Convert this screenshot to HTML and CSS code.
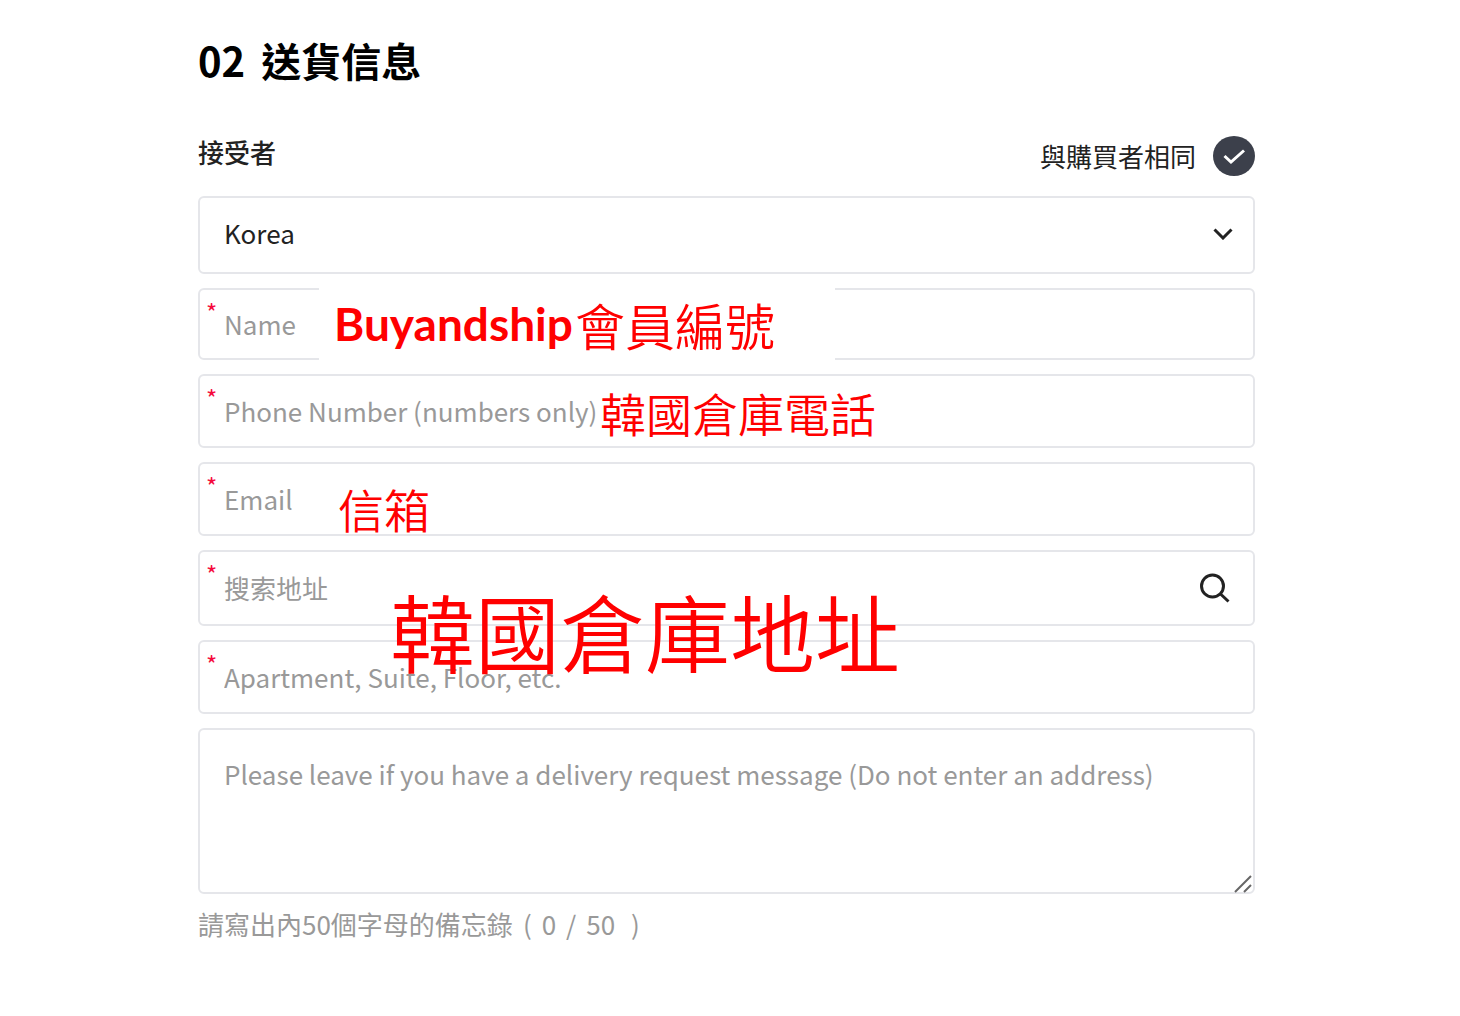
FILE: index.html
```html
<!DOCTYPE html>
<html lang="zh-Hant">
<head>
<meta charset="utf-8">
<meta name="viewport" content="width=device-width, initial-scale=1">
<title>送貨信息</title>
<link rel="stylesheet" href="styles.css">
</head>
<body>
<main class="page">
  <h1 class="title"><span>02</span> <span>送貨信息</span></h1>
  <form class="form">
    <div class="form-head">
      <h2 class="subtitle">接受者</h2>
      <label class="same" for="same">與購買者相同
        <span class="check">
          <input class="check-input" type="checkbox" id="same" checked>
          <svg class="check-mark" viewBox="0 0 42 40" aria-hidden="true"><path d="M11.500 20l6.500 6L31 14.500"/></svg>
        </span>
      </label>
    </div>

    <div class="field field-country">
      <select class="control select" aria-label="Country">
        <option>Korea</option>
      </select>
      <svg class="icon chevron" viewBox="0 0 20 12" aria-hidden="true"><path d="M1.500 1.500L10 10l8.500-8.500"/></svg>
    </div>

    <div class="field field-name required">
      <input class="control" type="text" placeholder="Name" aria-label="Name" required>
      <p class="note note-name"><b class="note-brand">Buyandship</b><span>會員編號</span></p>
    </div>

    <div class="field required">
      <input class="control" type="tel" placeholder="Phone Number (numbers only)" aria-label="Phone Number" required>
      <p class="note note-phone">韓國倉庫電話</p>
    </div>

    <div class="field required">
      <input class="control" type="email" placeholder="Email" aria-label="Email" required>
      <p class="note note-email">信箱</p>
    </div>

    <div class="field field-address required">
      <input class="control" type="text" placeholder="搜索地址" aria-label="搜索地址" required>
      <button class="search" type="button" aria-label="搜索">
        <svg class="search-icon" viewBox="0 0 32 32" aria-hidden="true"><circle cx="13.500" cy="14" r="11"/><path d="M21.500 22l8 7.500"/></svg>
      </button>
      <p class="note note-address">韓國倉庫地址</p>
    </div>

    <div class="field required">
      <input class="control" type="text" placeholder="Apartment, Suite, Floor, etc." aria-label="Apartment, Suite, Floor, etc." required>
    </div>

    <div class="field field-message">
      <textarea class="control message" placeholder="Please leave if you have a delivery request message (Do not enter an address)" aria-label="Delivery request message" aria-describedby="count" maxlength="50"></textarea>
      <svg class="grip" viewBox="0 0 20 20" aria-hidden="true"><path d="M2 18L18 2M11 18l7-7"/></svg>
    </div>
    <p class="count" id="count"><span>請寫出內50個字母的備忘錄</span> <span>(</span> <span>0</span> <span>/</span> <span>50</span> <span>&nbsp;)</span></p>
  </form>
</main>
</body>
</html>
```
FILE: styles.css
```css
* {
  box-sizing: border-box;
}

body {
  margin: 0;
  background: #fff;
  color: #222;
  font-family: "Noto Sans CJK TC", "Noto Sans", sans-serif;
  font-size: 26px;
  line-height: 36px;
}

.page {
  padding: 30px 205px 72px 198px;
}

.title {
  display: flex;
  gap: 16px;
  margin: 0 0 44px;
  color: #000;
  font-size: 40px;
  line-height: 60px;
  font-weight: 700;
}

.form {
  display: flex;
  flex-direction: column;
  gap: 14px;
}

.form-head {
  display: flex;
  justify-content: space-between;
  height: 48px;
}

.subtitle {
  margin: 0;
  font-size: 26px;
  line-height: 36px;
  font-weight: 500;
}

.same {
  display: flex;
  align-items: center;
  gap: 17px;
  height: 44px;
}

.check {
  display: grid;
  width: 42px;
  height: 40px;
}

.check-input,
.check-mark {
  grid-area: 1 / 1;
  width: 100%;
  height: 100%;
  margin: 0;
}

.check-input {
  appearance: none;
  border-radius: 50%;
  background: #3c404b;
}

.check-mark {
  fill: none;
  stroke: #fff;
  stroke-width: 3;
  pointer-events: none;
}

.field {
  position: relative;
  display: flex;
  height: 74px;
}

.field-country {
  height: 78px;
}

.field-name {
  height: 72px;
}

.field-address {
  height: 76px;
}

.field-message {
  height: 166px;
}

.control {
  flex: 1;
  min-width: 0;
  margin: 0;
  padding: 0 24px;
  border: 2px solid #e5e6ea;
  border-radius: 6px;
  background: #fff;
  color: #222;
  font: inherit;
}

.control::placeholder {
  color: #999;
  opacity: 1;
}

.select {
  appearance: none;
  padding-bottom: 4px;
}

.message {
  padding: 26px 24px;
  resize: none;
}

.required::before {
  content: "*";
  position: absolute;
  top: 8px;
  left: 8px;
  color: #f5093c;
  font-size: 24px;
  line-height: 32px;
}

.icon,
.search,
.grip {
  position: absolute;
}

.chevron {
  top: 32px;
  right: 22px;
  width: 20px;
  height: 12px;
  fill: none;
  stroke: #222;
  stroke-width: 3;
  pointer-events: none;
}

.search {
  top: 22px;
  right: 24px;
  width: 32px;
  height: 32px;
  padding: 0;
  border: 0;
  background: none;
}

.search-icon {
  display: block;
  fill: none;
  stroke: #222;
  stroke-width: 3;
}

.grip {
  right: 2px;
  bottom: 0;
  width: 20px;
  height: 20px;
  fill: none;
  stroke: #666;
  stroke-width: 2;
}

.note {
  position: absolute;
  z-index: 1;
  margin: 0;
  color: #f00;
  font-size: 46px;
  line-height: 60px;
  font-weight: 350;
  white-space: nowrap;
  pointer-events: none;
}

.note-name {
  display: flex;
  gap: 2px;
  top: 0;
  left: 121px;
  width: 516px;
  height: 72px;
  padding-left: 15px;
  background: #fff;
  font-size: 50px;
  line-height: 72px;
}

.note-brand {
  font-family: Lato, sans-serif;
  font-size: 46px;
  font-weight: 700;
}

.note-phone {
  top: 8px;
  left: 402px;
}

.note-email {
  top: 16px;
  left: 140px;
}

.note-address {
  top: 30px;
  left: 192px;
  font-size: 85px;
  line-height: 100px;
}

.count {
  display: flex;
  gap: 10px;
  margin: -2px 0 0;
  color: #999;
}
```
